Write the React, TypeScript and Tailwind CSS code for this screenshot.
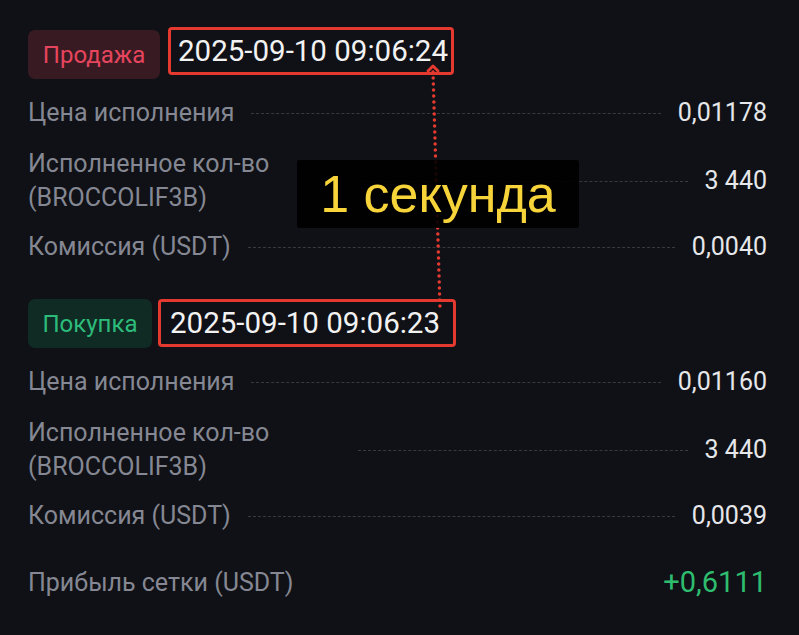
type Row = { label: string[]; value: string; labelWidth?: string; height: string };

const sellRows: Row[] = [
  { label: ["Цена исполнения"], value: "0,01178", height: "h-[68px]" },
  { label: ["Исполненное кол-во", "(BROCCOLIF3B)"], value: "3 440", labelWidth: "w-[313px]", height: "h-[68px]" },
  { label: ["Комиссия (USDT)"], value: "0,0040", height: "h-[64px]" },
];

const buyRows: Row[] = [
  { label: ["Цена исполнения"], value: "0,01160", height: "h-[68px]" },
  { label: ["Исполненное кол-во", "(BROCCOLIF3B)"], value: "3 440", labelWidth: "w-[313px]", height: "h-[68px]" },
  { label: ["Комиссия (USDT)"], value: "0,0039", height: "h-[64px]" },
];

function DetailRow({ row }: { row: Row }) {
  return (
    <div className={`flex items-center ${row.height}`}>
      <div className={`shrink-0 text-[25px] leading-[34px] text-[#858893] ${row.labelWidth ?? ""}`}>
        {row.label.map((line) => (
          <div key={line}>{line}</div>
        ))}
      </div>
      <div className="mx-[17px] flex-1 border-t border-dashed border-[#383a42]" />
      <div className="shrink-0 text-[25px] text-[#e6e7ea]">{row.value}</div>
    </div>
  );
}

function Header({
  side,
  time,
  boxClass,
}: {
  side: "sell" | "buy";
  time: string;
  boxClass: string;
}) {
  const badge =
    side === "sell"
      ? "w-[132px] bg-[#371a22] text-[#e6455d] mt-[3px]"
      : "w-[124px] bg-[#0f2b23] text-[#2dbb7b] mt-[3px]";
  return (
    <div className="flex h-[52px] items-start">
      <div className={`flex h-[49px] items-center justify-center rounded-[7px] text-[24px] ${badge}`}>
        {side === "sell" ? "Продажа" : "Покупка"}
      </div>
      <div
        className={`flex h-[48px] items-center rounded-[4px] border-[3px] border-[#e4392e] text-[29.5px] text-[#f2f2f2] ${boxClass}`}
      >
        {time}
      </div>
    </div>
  );
}

export default function App() {
  return (
    <div className="relative h-[635px] w-[799px] overflow-hidden bg-[#101116] font-['Roboto',sans-serif]">
      <div className="pl-[28px] pr-[32px] pt-[27px]">
        <Header side="sell" time="2025-09-10 09:06:24" boxClass="ml-[8px] w-[286px] pl-[7px]" />
        {sellRows.map((r, i) => (
          <DetailRow key={i} row={r} />
        ))}
        <div className="mt-[17px]">
          <Header side="buy" time="2025-09-10 09:06:23" boxClass="ml-[6px] mt-[3px] w-[298px] pl-[9px]" />
          {buyRows.map((r, i) => (
            <DetailRow key={i} row={r} />
          ))}
        </div>
        <div className="mt-[3px] flex h-[64px] items-center justify-between">
          <span className="text-[25px] text-[#858893]">Прибыль сетки (USDT)</span>
          <span className="text-[29px] text-[#2ebd6f]">+0,6111</span>
        </div>
      </div>

      <svg className="pointer-events-none absolute left-0 top-0" width="799" height="635">
        <line
          x1="433"
          y1="72"
          x2="440"
          y2="308"
          stroke="#e43a30"
          strokeWidth="3.5"
          strokeLinecap="round"
          strokeDasharray="0 6"
        />
        <polyline
          points="428,71 433,66 438,71"
          fill="none"
          stroke="#e43a30"
          strokeWidth="3"
          strokeLinecap="round"
          strokeLinejoin="round"
        />
      </svg>

      <div className="absolute left-[297px] top-[160px] flex h-[68px] w-[282px] items-center justify-center rounded-[2px] bg-black/90 font-['Liberation_Sans',Arial,sans-serif] text-[52px] leading-none text-[#f7d43a]">
        1 секунда
      </div>
    </div>
  );
}
